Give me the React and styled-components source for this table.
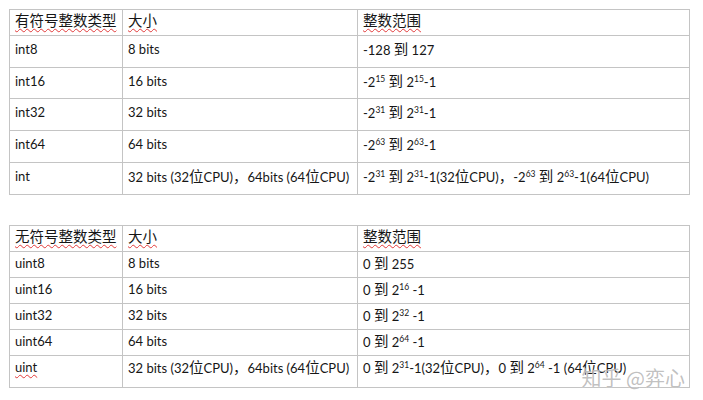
import React from "react";
import styled, { createGlobalStyle } from "styled-components";

const Global = createGlobalStyle`
  html, body { margin: 0; padding: 0; background: #fff; }
  body { font-family: "Lato", "Noto Sans CJK SC", sans-serif; color: #161616; }
`;

const Page = styled.div`
  position: relative;
  width: 703px;
  height: 400px;
  box-sizing: border-box;
  padding: 9px 0 0 9px;
  display: flex;
  flex-direction: column;
  gap: 30px;
  overflow: hidden;
`;

const Table = styled.table`
  border-collapse: collapse;
  table-layout: fixed;
  width: 680px;
  font-size: 13px;
`;

const Row = styled.tr`
  height: ${(p) => p.$h}px;
`;

const Cell = styled.td`
  border: 1px solid #c4c4c4;
  padding: ${(p) => p.$pt}px 5px 0 5px;
  vertical-align: top;
  line-height: 18px;
  white-space: nowrap;
  overflow: hidden;
`;

const HeadCell = styled(Cell)`
  font-size: 14.5px;
`;

const Wavy = styled.span`
  text-decoration: underline wavy #e23a3a;
  text-decoration-thickness: 1px;
  text-underline-offset: 2px;
  text-decoration-skip-ink: none;
`;

const Han = styled.span`
  font-family: "Noto Sans CJK SC", sans-serif;
  font-size: 14.5px;
`;

const Sup = styled.sup`
  font-size: 8.5px;
  vertical-align: 5px;
  line-height: 0;
`;

const Watermark = styled.div`
  position: absolute;
  right: 18px;
  bottom: 12px;
  font-family: "Noto Sans CJK SC", sans-serif;
  font-size: 20px;
  line-height: 20px;
  color: rgba(140, 140, 140, 0.55);
  text-shadow: 0 0 1px rgba(255, 255, 255, 0.9);
  white-space: nowrap;
  pointer-events: none;
`;

function rich(text) {
  const parts = [];
  const re = /(\^\d+)|([\u3000-\u9fff\uff00-\uffef]+)|([^\^\u3000-\u9fff\uff00-\uffef]+)/g;
  let m;
  let k = 0;
  while ((m = re.exec(text))) {
    if (m[1]) parts.push(<Sup key={k++}>{m[1].slice(1)}</Sup>);
    else if (m[2]) parts.push(<Han key={k++}>{m[2]}</Han>);
    else parts.push(<React.Fragment key={k++}>{m[3]}</React.Fragment>);
  }
  return parts;
}

const signed = {
  head: ["有符号整数类型", "大小", "整数范围"],
  rows: [
    ["int8", "8 bits", "-128 到 127"],
    ["int16", "16 bits", "-2^15 到 2^15-1"],
    ["int32", "32 bits", "-2^31 到 2^31-1"],
    ["int64", "64 bits", "-2^63 到 2^63-1"],
    ["int", "32 bits (32位CPU)，64bits (64位CPU)", "-2^31 到 2^31-1(32位CPU)，-2^63 到 2^63-1(64位CPU)"],
  ],
  rowH: [32, 31, 32, 32, 32],
  pt: 4,
};

const unsigned = {
  head: ["无符号整数类型", "大小", "整数范围"],
  rows: [
    ["uint8", "8 bits", "0 到 255"],
    ["uint16", "16 bits", "0 到 2^16 -1"],
    ["uint32", "32 bits", "0 到 2^32 -1"],
    ["uint64", "64 bits", "0 到 2^64 -1"],
    ["uint", "32 bits (32位CPU)，64bits (64位CPU)", "0 到 2^31-1(32位CPU)，0 到 2^64 -1 (64位CPU)"],
  ],
  rowH: [26, 26, 26, 26, 32],
  pt: 2,
};

function IntTable({ data, wavyFirst }) {
  return (
    <Table>
      <colgroup>
        <col style={{ width: 113 }} />
        <col style={{ width: 235 }} />
        <col style={{ width: 332 }} />
      </colgroup>
      <tbody>
        <Row $h={26}>
          {data.head.map((h, i) => (
            <HeadCell key={i} $pt={2}>
              <Wavy>{h}</Wavy>
            </HeadCell>
          ))}
        </Row>
        {data.rows.map((r, i) => (
          <Row key={i} $h={data.rowH[i]}>
            {r.map((c, j) => (
              <Cell key={j} $pt={data.pt}>
                {j === 0 && wavyFirst === c ? <Wavy>{c}</Wavy> : rich(c)}
              </Cell>
            ))}
          </Row>
        ))}
      </tbody>
    </Table>
  );
}

export default function App() {
  return (
    <>
      <Global />
      <Page>
        <IntTable data={signed} />
        <IntTable data={unsigned} wavyFirst="uint" />
        <Watermark>知乎 @弈心</Watermark>
      </Page>
    </>
  );
}
